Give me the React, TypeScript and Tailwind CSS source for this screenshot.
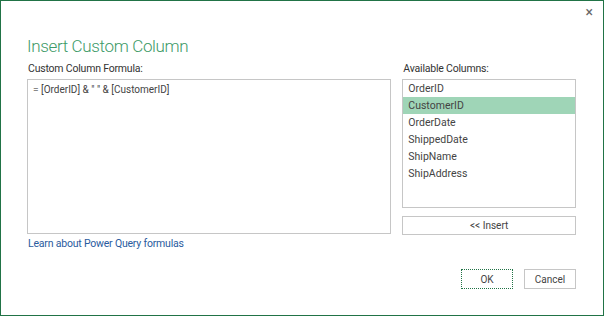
import React from "react";

export default function App() {
  const cols = ["OrderID", "CustomerID", "OrderDate", "ShippedDate", "ShipName", "ShipAddress"];
  return (
    <div
      className="w-[604px] h-[316px] bg-white border border-[#217346] relative text-[#444]"
      style={{ fontFamily: 'Roboto, Lato, sans-serif' }}
    >
      <div className="absolute right-[10px] top-[4px] text-[14px] text-[#666] leading-none">×</div>
      <div className="pl-[26px] pr-[27px] pt-[32px]">
        <div className="text-[17px] leading-[26px] tracking-[-0.35px] text-[#3d9a67] font-light">Insert Custom Column</div>
        <div className="flex gap-[11px] mt-[3px]">
          <div className="flex flex-col w-[365px]">
            <div className="text-[10.5px] leading-[14px] tracking-[-0.2px] text-[#333] pl-[1px]">Custom Column Formula:</div>
            <div className="mt-[3px] h-[155px] border border-[#c6c6c6] px-[5px] pt-[3px] text-[10px] leading-[14px] text-[#444]">
              <span className="text-[#888]">=</span> [OrderID] &amp; " " &amp; [CustomerID]
            </div>
            <div className="mt-[3px] text-[10.5px] leading-[14px] tracking-[-0.2px] text-[#2a5b9e] pl-[1px]">
              Learn about Power Query formulas
            </div>
          </div>
          <div className="flex flex-col w-[174px]">
            <div className="text-[10.5px] leading-[14px] tracking-[-0.2px] text-[#333] pl-[1px]">Available Columns:</div>
            <div className="mt-[3px] h-[129px] border border-[#c6c6c6]">
              {cols.map((c) => (
                <div
                  key={c}
                  className={
                    "h-[17px] leading-[17px] pl-[5px] text-[10.5px] text-[#444] " +
                    (c === "CustomerID" ? "bg-[#9fd5b7]" : "")
                  }
                >
                  {c}
                </div>
              ))}
            </div>
            <div className="mt-[8px] h-[19px] border border-[#c6c6c6] flex items-center justify-center text-[10px] text-[#444]">
              &lt;&lt; Insert
            </div>
          </div>
        </div>
        <div className="flex justify-end gap-[11px] mt-[18px]">
          <div className="w-[52px] h-[20px] border border-dotted border-[#217346] flex items-center justify-center text-[10px] text-[#444]">
            OK
          </div>
          <div className="w-[52px] h-[20px] border border-[#c6c6c6] flex items-center justify-center text-[10px] text-[#444]">
            Cancel
          </div>
        </div>
      </div>
    </div>
  );
}
